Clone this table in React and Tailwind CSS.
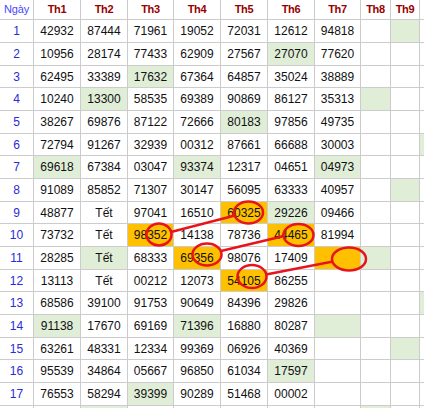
import React from "react";

const rows = [
  ["42932", "87444", "71961", "19052", "72031", "12612", "94818"],
  ["10956", "28174", "77433", "62909", "27567", "27070", "77620"],
  ["62495", "33389", "17632", "67364", "64857", "35024", "38889"],
  ["10240", "13300", "58535", "69389", "90869", "86127", "35313"],
  ["38267", "69876", "87122", "72666", "80183", "97856", "49735"],
  ["72794", "91267", "32939", "00312", "87661", "66688", "30003"],
  ["69618", "67384", "03047", "93374", "12317", "04651", "04973"],
  ["91089", "85852", "71307", "30147", "56095", "63333", "40957"],
  ["48877", "Tết", "97041", "16510", "60325", "29226", "09466"],
  ["73732", "Tết", "98352", "14138", "78736", "44465", "81994"],
  ["28285", "Tết", "68333", "69356", "98076", "17409", ""],
  ["13113", "Tết", "00212", "12073", "54105", "86255", ""],
  ["68586", "39100", "91753", "90649", "84396", "29826", ""],
  ["91138", "17670", "69169", "71396", "16880", "80287", ""],
  ["63261", "48331", "12334", "99369", "06926", "40369", ""],
  ["95539", "34864", "05667", "96850", "61034", "17597", ""],
  ["76553", "58294", "39399", "90289", "51468", "00002", ""],
  ["", "", "", "", "", "", ""],
];

// cell marks: "g" = green, "o" = orange; key is "row-col" (col 1..10)
const marks = {
  "1-9": "g",
  "2-6": "g",
  "3-3": "g",
  "4-2": "g",
  "4-8": "g",
  "5-5": "g",
  "6-10": "g",
  "7-1": "g",
  "7-4": "g",
  "7-7": "g",
  "8-9": "g",
  "9-5": "o",
  "9-6": "g",
  "10-3": "o",
  "10-6": "o",
  "11-2": "g",
  "11-4": "o",
  "11-7": "o",
  "11-8": "g",
  "12-5": "o",
  "13-10": "g",
  "14-1": "g",
  "14-4": "g",
  "14-7": "g",
  "15-9": "g",
  "16-6": "g",
  "17-3": "g",
  "18-2": "g",
  "18-8": "g",
};

const heads = ["Th1", "Th2", "Th3", "Th4", "Th5", "Th6", "Th7", "Th8", "Th9", ""];

const cellBg = (r, c) => {
  const m = marks[`${r}-${c}`];
  if (m === "g") return "bg-[#e0eed8]";
  if (m === "o") return "bg-[#ffc000]";
  return "bg-white";
};

export default function App() {
  return (
    <div className="relative w-[424px] h-[408px] overflow-hidden bg-white font-['Liberation_Sans',Arial,sans-serif]">
      <div className="grid grid-cols-[33px_46px_46px_45px_46px_46px_46px_45px_29px_28px_20px] grid-rows-[19px_repeat(6,22px_22px_21px)] gap-px bg-[#cccccc] w-[464px]">
        <div className="bg-white flex items-center justify-center text-[11px] text-[#4848ff] tracking-[-0.2px]">
          Ngày
        </div>
        {heads.map((h, i) => (
          <div
            key={i}
            className="bg-white flex items-center justify-center text-[11px] font-bold text-[#990000] tracking-[-0.3px]"
          >
            {h}
          </div>
        ))}

        {rows.map((row, ri) => {
          const r = ri + 1;
          const full = [...row, "", "", ""];
          return (
            <React.Fragment key={r}>
              <div className="bg-white flex items-center justify-center text-[12px] text-[#2a2ad8]">
                {r === 18 ? "" : r}
              </div>
              {full.map((v, ci) => (
                <div
                  key={ci}
                  className={`${cellBg(r, ci + 1)} flex items-center justify-center text-[12px] text-[#111111]`}
                >
                  {v}
                </div>
              ))}
            </React.Fragment>
          );
        })}
      </div>

      {/* hand drawn red markings over the sheet */}
      <svg
        className="absolute inset-0 pointer-events-none"
        width="424"
        height="408"
        viewBox="0 0 424 408"
        fill="none"
        stroke="#e8141c"
        strokeWidth="2.5"
      >
        <ellipse cx="159" cy="234.5" rx="12.5" ry="11" />
        <ellipse cx="248.5" cy="212.5" rx="14.5" ry="11" />
        <ellipse cx="298.5" cy="235" rx="15" ry="11" />
        <ellipse cx="207" cy="254.5" rx="14.5" ry="11" />
        <ellipse cx="349" cy="259" rx="17" ry="11.5" />
        <ellipse cx="252" cy="276.5" rx="14.5" ry="11.5" />
        <line x1="171" y1="232" x2="235" y2="215.5" />
        <line x1="221" y1="251" x2="284" y2="236" />
        <line x1="266" y1="274.5" x2="333" y2="261.5" />
      </svg>
    </div>
  );
}
